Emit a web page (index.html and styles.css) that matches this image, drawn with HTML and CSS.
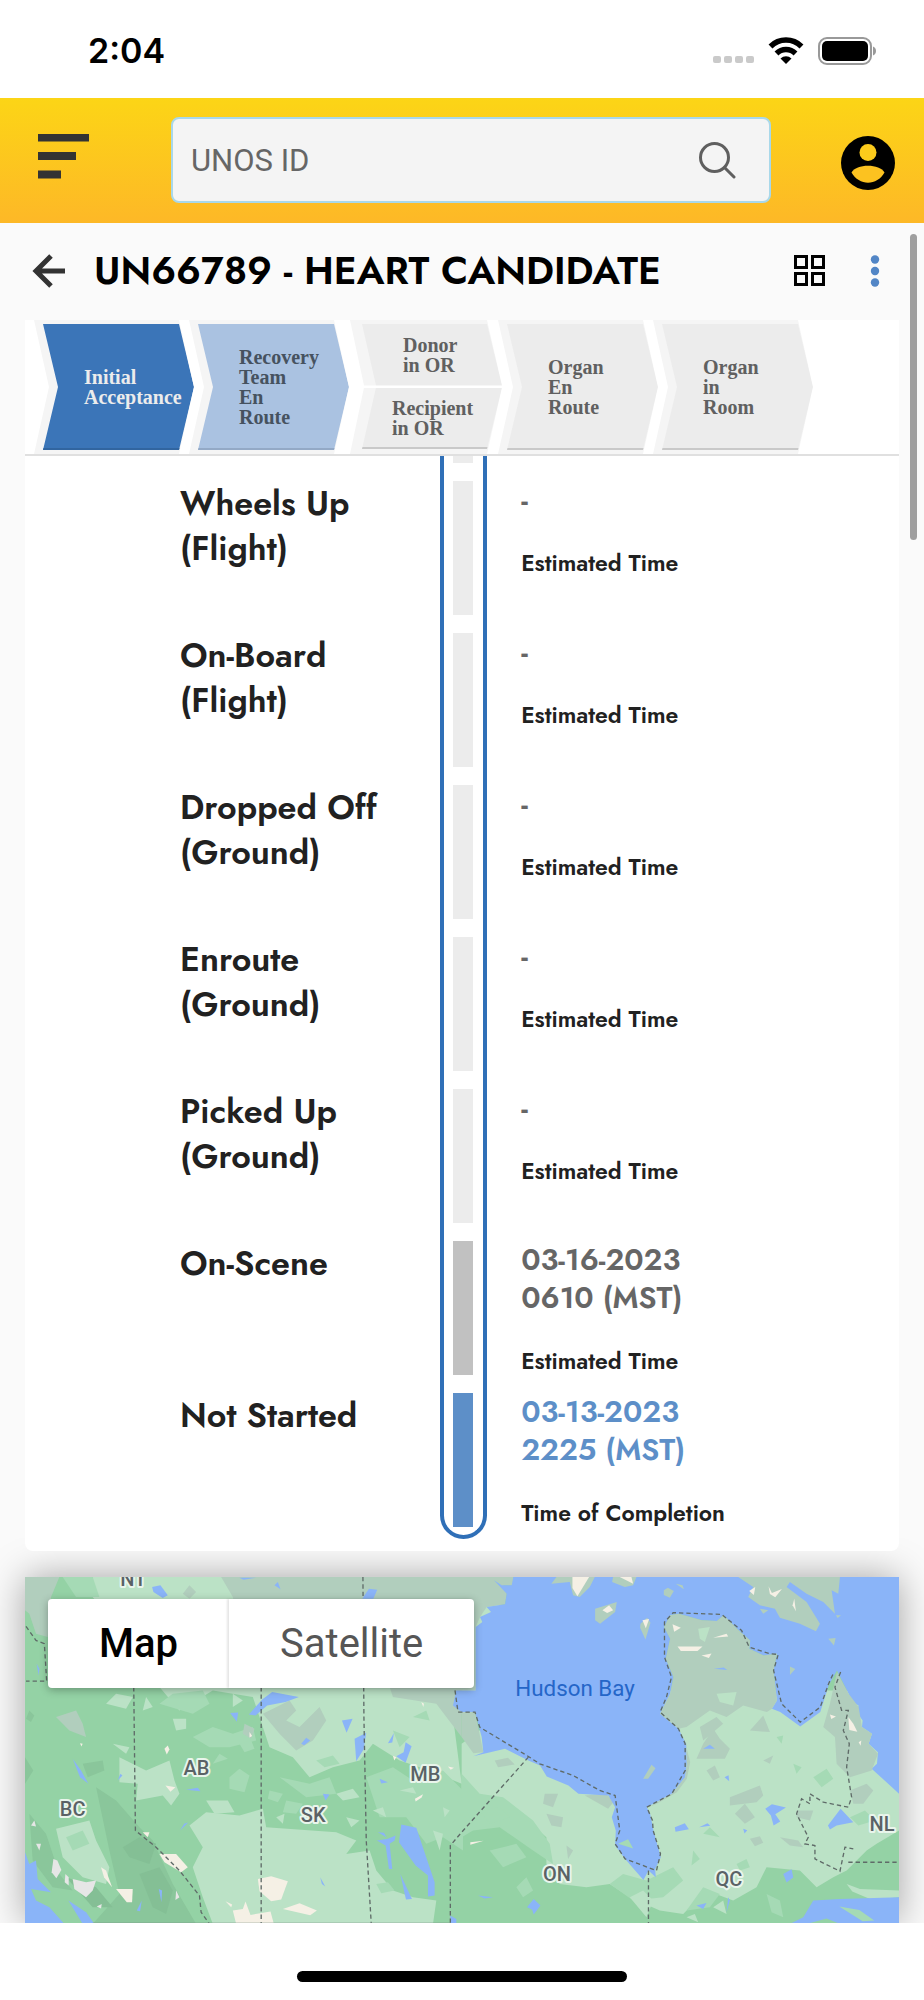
FILE: index.html
```html
<!DOCTYPE html>
<html lang="en">
  <head>
    <meta charset="UTF-8" />
    <meta name="viewport" content="width=device-width, initial-scale=1.0" />
    <title>UN66789 - Heart Candidate</title>
    <link rel="stylesheet" href="styles.css">
  </head>
  <body>
    <div class="status-bar">
      <span class="clock">2:04</span>
      <div class="status-icons">
        <svg width="41" height="28" viewBox="0 0 41 28" fill="#cacaca">
          <rect x="0" y="19" width="8" height="7" rx="2" />
          <rect x="11" y="19" width="8" height="7" rx="2" />
          <rect x="22" y="19" width="8" height="7" rx="2" />
          <rect x="33" y="19" width="8" height="7" rx="2" />
        </svg>
        <svg width="36" height="28" viewBox="0 0 36 28">
          <g fill="none" stroke="#000" stroke-width="5.500">
            <path d="M2.500 9.500a22 22 0 0 1 31 0" />
            <path d="M8.500 16.500a13.500 13.500 0 0 1 19 0" />
          </g>
          <path d="M12.500 21.500a8 8 0 0 1 11 0L18 27z" />
        </svg>
        <svg width="59" height="28" viewBox="0 0 59 28">
          <rect x="1" y="1" width="52" height="26" rx="8" fill="none" stroke="#999" stroke-width="2" />
          <rect x="4" y="4" width="46" height="20" rx="5" />
          <path d="M55 9.500c4 1 4 8 0 9z" fill="#999" />
        </svg>
      </div>
    </div>

    <header class="app-header">
      <button class="icon-btn" aria-label="Menu">
        <svg width="51" height="52" viewBox="0 1 51 52" fill="#333">
          <rect x="0" y="0.500" width="51" height="8" />
          <rect x="0" y="19" width="38" height="8" />
          <rect x="0" y="37.500" width="23" height="8" />
        </svg>
      </button>
      <form class="search">
        <input type="text" placeholder="UNOS ID" aria-label="UNOS ID" />
        <button class="icon-btn" type="button" aria-label="Search">
          <svg width="38" height="38" viewBox="0 0 38 38" fill="none" stroke="#5f5f5f" stroke-width="3">
            <circle cx="16.500" cy="16.500" r="14" />
            <path d="M26.500 26.500L36 36" stroke-linecap="round" />
          </svg>
        </button>
      </form>
      <button class="icon-btn" aria-label="Account">
        <svg width="54" height="60" viewBox="0 0 54 60">
          <circle cx="27" cy="33" r="27" />
          <circle cx="27" cy="22.500" r="8.500" fill="#fccb1c" />
          <path d="M10.500 42.500C15 33.500 39 33.500 43.500 42.500C36 56 18 56 10.500 42.500z" fill="#fcc220" />
        </svg>
      </button>
    </header>

    <main class="content">
      <div class="title-row">
        <button class="icon-btn" aria-label="Back">
          <svg width="34" height="34" viewBox="0 0 34 34" fill="none" stroke="#333" stroke-width="5">
            <path d="M33 17H4M19 2L4 17l15 15" />
          </svg>
        </button>
        <h1>UN66789 - HEART CANDIDATE</h1>
        <button class="icon-btn" aria-label="Grid view">
          <svg width="31" height="31" viewBox="0 0 31 31" fill="none" stroke="#000" stroke-width="3">
            <path d="M1.500 1.500h11v11h-11zM18.500 1.500h11v11h-11zM1.500 18.500h11v11h-11zM18.500 18.500h11v11h-11z" />
          </svg>
        </button>
        <button class="icon-btn more" aria-label="More">
          <svg width="10" height="32" viewBox="0 0 10 32" fill="#5286c6">
            <circle cx="5" cy="4.500" r="4.200" />
            <circle cx="5" cy="16" r="4.200" />
            <circle cx="5" cy="27.500" r="4.200" />
          </svg>
        </button>
      </div>

      <section class="card">
        <div class="steps">
          <div class="step"><div class="step-body active">Initial<br />Acceptance</div></div>
          <div class="step"><div class="step-body next">Recovery<br />Team<br />En<br />Route</div></div>
          <div class="step-split">
            <div class="half top"><div class="half-body">Donor<br />in OR</div></div>
            <div class="half bottom"><div class="half-body">Recipient<br />in OR</div></div>
          </div>
          <div class="step"><div class="step-body">Organ<br />En<br />Route</div></div>
          <div class="step"><div class="step-body">Organ<br />in<br />Room</div></div>
        </div>

        <ul class="timeline">
          <li class="row cut"><span></span><div class="track"><i></i></div></li>
          <li class="row">
            <h2>Wheels Up<br />(Flight)</h2>
            <div class="track"><i></i></div>
            <div class="times"><p class="date">-</p><p class="note">Estimated Time</p></div>
          </li>
          <li class="row">
            <h2>On-Board<br />(Flight)</h2>
            <div class="track"><i></i></div>
            <div class="times"><p class="date">-</p><p class="note">Estimated Time</p></div>
          </li>
          <li class="row">
            <h2>Dropped Off<br />(Ground)</h2>
            <div class="track"><i></i></div>
            <div class="times"><p class="date">-</p><p class="note">Estimated Time</p></div>
          </li>
          <li class="row">
            <h2>Enroute<br />(Ground)</h2>
            <div class="track"><i></i></div>
            <div class="times"><p class="date">-</p><p class="note">Estimated Time</p></div>
          </li>
          <li class="row">
            <h2>Picked Up<br />(Ground)</h2>
            <div class="track"><i></i></div>
            <div class="times"><p class="date">-</p><p class="note">Estimated Time</p></div>
          </li>
          <li class="row current">
            <h2>On-Scene</h2>
            <div class="track"><i></i></div>
            <div class="times"><p class="date">03-16-2023<br />0610 (MST)</p><p class="note">Estimated Time</p></div>
          </li>
          <li class="row done">
            <h2>Not Started</h2>
            <div class="track"><i></i></div>
            <div class="times"><p class="date">03-13-2023<br />2225 (MST)</p><p class="note">Time of Completion</p></div>
          </li>
        </ul>
      </section>

      <section class="map">
        <svg class="map-canvas" viewBox="77 140 2620 1040" preserveAspectRatio="xMidYMin slice">
          <rect x="77" y="140" width="2620" height="1040" fill="#94d2a5" />

          <!-- light prairie and shield areas -->
          <g fill="#bbe2c6">
            <path d="M280 140H1500V500L1360 560L1386 760L1290 720L1200 690L1120 640L1080 690L1000 710L930 740L880 680L810 650L780 560L760 500L640 480L540 540L480 470L280 200z" />
            <path d="M570 885L620 845L720 855L790 835L800 890L1010 905L1070 930L1040 970L1110 960L1130 1020L1180 1080L1240 1100L1310 1110L1300 1180H640L610 1100L580 1010L610 950z" />
            <path d="M360 680L440 720L510 690L525 750L540 790L515 825L490 795L410 810L415 760L360 755z" />
            <path d="M170 895L270 870L290 930L330 1010L320 1060L250 1040L190 980z" />
            <path d="M520 565h40v30l-30 5z" />
            <path d="M350 490l50 10-20 35-60-15z" />
            <path d="M620 810l25 40 60-5-20-35z" />
            <path d="M1386 640L1600 480H2697V900L2630 940L2600 960L2540 1020L2500 1040L2450 1070L2400 1020L2300 1010L2270 1070L2200 1110L2120 1080L2050 1150L1980 1140L1890 1100L1830 1060L1760 1070L1680 1060L1640 1000L1640 920L1560 850L1490 800L1386 790z" />
          </g>

          <!-- mid green -->
          <g fill="#a5dab5">
            <path d="M190 140H280L300 200H230z" />
            <path d="M690 740l30-25 30 20-15 50-45-10z" />
            <path d="M580 620l60-30 60 20 60-20 10 40-80 20-60 0z" />
            <path d="M1100 740l80-30 60 40 90-30 60 60v180l-60-40-50 20-60-80-80 0z" />
            <path d="M1386 730L1440 790L1510 800L1600 870L1650 940L1660 1000L1600 960L1500 890L1420 900L1386 920z" />
            <path d="M1470 960l80-20 30 40-70 30z" />
            <path d="M840 740l90 20 60-20 20 50-90 10z" />
            <path d="M480 520l40-30 90-10 20 40-50 30z" />
            <path d="M1830 1060l40-30 70 20 80-40 30 40-60 50-90 10z" />
            <path d="M1945 870l20 40 10 110-15-20z" />
            <path d="M2300 1090l40 20 10 50-35-15z" />
            <path d="M2080 960l20 25-25 20z" />
            <path d="M2110 1070l50 20-30 40-70 10z" />
            <path d="M200 920l50-20 20 40-50 20z" />
            <path d="M1130 1060l35-5 20 25-40 8z" />
            <path d="M720 640l35-10 10 25-30 10zM640 700l20-30 25 15zM810 780l40 10-15 25-30-10zM950 690l50-15 20 25-45 10zM1180 600l50 20-30 30zM1240 560l40-20 10 30z" />
            <path d="M2440 740l40-25 20 30-35 25zM2330 620l20-5-5 25zM2210 1000l30-15 10 25-30 10zM2110 910l20-20 30 30zM2380 700l25 10-15 20zM2550 860l45-20 30 30-50 15z" />
            <path d="M1440 840l60-10 30 30-60 20zM1550 1070l30-30 20 40-30 20zM860 810l50 10-20 30-40-5z" />
          </g>
          <g fill="#bbe2c6">
            <path d="M1010 790l50-15 20 25-50 10z" />
            <path d="M340 640l50 10-10 20zM440 500l20 30-30 10zM700 490l30 20-30 20zM830 860l25-10-5 30zM1040 860l40 10-25 20zM1200 780l40-10 10 20zM1120 840l30-10 10 30z" />
            <path d="M370 1090l40-15 10 30-30 30zM1330 830l20 10-15 20zM1300 900l30 10-10 50zM2540 1060l40 15 117 5v20l-80 8-60-25z" />
            <path d="M1890 1100l40-20 30 30-20 50zM2140 1130l30-20 10 40zM2060 1160l25-10 10 25z" />
          </g>

          <!-- mountains -->
          <g fill="#8ac69b">
            <path d="M90 540l15 15-10 20-15-10z" />
            <path d="M290 770l60 40 70 80 40 40 60 130 70 120H280l80-90-30-130z" />
            <path d="M77 680l25 40-25 40z" />
            <path d="M250 700l60-10 5 30-50 20z" />
            <path d="M90 850l50 60 40 120 40 50-60-10-60-80z" />
          </g>
          <g fill="#84bf95">
            <path d="M370 950l50-30 50 20-20 60-60-20z" />
            <path d="M420 1030l60-20 40 70-20 70-40-20z" />
            <path d="M200 1040l90 30 50 60-60 0z" />
          </g>

          <!-- tundra -->
          <g fill="#b1cebd">
            <path d="M77 140H180L155 200L145 320L110 310L90 250L77 240z" />
            <path d="M665 140H1541V165L1511 165L1521 190L1516 222L1461 230L1441 260L1428 290V480H1386V620L1340 560L1310 520L1180 500L1170 470H760L700 200z" />
            <path d="M790 550l80-40 20 30-30 30 40 20 60-60 20 40-40 60-50 30-50-50z" />
            <path d="M170 560l60-20 20 40 10 40-50-20z" />
            <path d="M550 190l20-25 20 20-20 20z" />
            <path d="M735 580l30 15-10 30-25-15z" />
            <path d="M1386 545H1426L1451 665L1421 668L1386 620z" />
            <path d="M1485 690l40-8 20 20-50 8z" />
            <path d="M1635 790l40 0-15 40-30-10z" />
            <path d="M1640 850l50 10-5 30-30-5z" />
            <path d="M1700 945l20 15-15 25z" />
            <path d="M1755 795l60-5 30 20-20 25z" />
          </g>

          <!-- Hudson Bay and the Atlantic -->
          <path fill="#8ab4f8" d="M1541 140L1536 165L1506 165L1483 150L1521 190L1516 222L1461 230L1474 245L1441 260L1448 275L1428 290V480H1370L1360 525L1386 545H1426L1446 620L1451 665L1421 677L1516 655L1586 690L1621 705L1641 738L1706 765L1736 790L1826 795L1846 830L1836 860L1848 900L1846 945L1876 985L1906 1020L1931 1048L1946 1020L1968 1040L1966 1015L1983 980L1961 900L1951 850L1941 830L2016 790L2056 740L2061 700L2059 640L2036 595L1981 550L2011 490L2021 440L1998 385L2011 325L1993 290L2011 255L2036 250L2106 270L2151 272L2171 255L2216 300L2251 330L2248 355L2291 375L2331 370L2321 420L2331 510L2316 535L2341 545L2401 588L2461 545L2486 465L2511 420L2546 490L2556 515L2576 525L2570 545L2588 570L2586 590L2616 610L2606 640L2634 665L2631 700L2615 715L2676 770L2697 790V140z" />
          <path fill="#b1cebd" d="M2060 590L2036 595L1981 550L2011 490L2021 440L1998 385L2011 325L1993 290L2011 255L2036 250L2106 270L2151 272L2171 255L2216 300L2251 330L2248 355L2291 375L2331 370L2321 420L2331 510L2316 535L2301 545L2230 525L2180 560L2130 540z" />
          <path fill="#b1cebd" d="M2511 425L2546 490L2576 530L2586 590L2616 610L2606 640L2634 670L2615 720L2550 740L2510 700L2505 620L2470 590L2490 520z" />
          <g fill="#b1cebd">
            <path d="M2036 595l20 40 15 60-10 50-30 40-60 35-25 10 70-40 40-50 5-40-2-60z" />
            <path d="M2100 590l50-30 20 20-60 50z" />
            <path d="M2110 640l30-45 20 30 30 30-15 30-85 0z" />
            <path d="M2250 600l40-45 20 50z" />
            <path d="M2120 720l25-15 15 35-20 10z" />
            <path d="M2190 800l90-35 10 30-20 20-80 10z" />
            <path d="M2205 850l30-30 30 40-30 20z" />
            <path d="M2250 925l30-8 10 20-25 10z" />
            <path d="M2340 920l55 10 15 20-40-5z" />
            <path d="M2390 840l50 0-10 30-40-10z" />
            <path d="M2290 690l30-15-10 25z" />
            <path d="M2550 780l50-20 20 20-30 40-30 0z" />
          </g>

          <!-- islands -->
          <g fill="#b1cebd">
            <path d="M1655 160l15-20h115l-15 30-30 30-20-5-10-40z" />
            <path d="M1840 140h70l-10 25-25 5-38-15z" />
            <path d="M1786 235l65-20-5 30-45 35-15-10z" />
            <path d="M1922 280l20-18 10 15-15 50-16-35z" />
            <path d="M1992 180l12-8 18 10-12 20-18-8z" />
            <path d="M2028 160l20 5 4 12z" />
            <path d="M2215 140H2520L2515 190L2495 180L2505 250L2470 215L2420 190L2370 155L2360 170L2420 215L2460 280L2448 303L2400 280L2340 262L2325 235L2280 225L2245 200L2260 170z" />
            <path d="M2485 325l22-2-5 22z" />
            <path d="M2280 235l25 5-15 10z" />
            <path d="M2370 408l16 8-16 18z" />
            <path d="M2508 255l15 0-10 8z" />
            <path d="M1930 745l25-42 12 10-22 32z" />
            <path d="M1855 940l30-14 15 28z" fill="#a5dab5" />
            <path d="M2095 295l35-5-15 45-15-10z" fill="#bbe2c6" />
            <path d="M2150 490l60-5-10 40-40-10z" fill="#bbe2c6" />
          </g>

          <!-- bare ground and snow -->
          <g fill="#f5f0e5">
            <path d="M1718 140h50l-35 58-15-25z" />
            <path d="M1860 140h35l5 20z" />
            <path d="M1808 240l20-15 12 15-18 8z" />
            <path d="M1928 270l20-4-10 28z" />
            <path d="M2018 282l25 10-20 12z" />
            <path d="M2033 348l75 0-15 14-50 0z" />
            <path d="M2140 322l40-12 5 8z" />
            <path d="M2105 375l30-6-8 14z" />
            <path d="M2248 182l18-12-4 24z" />
            <path d="M2306 168l10 20 30-12-20 25-16-10z" />
            <path d="M2378 225l5-20 5 38z" />
            <path d="M2545 560l15 20 12 24-24-5z" />
            <path d="M775 1045l40-8 50 15-20 55-30 5-35-30z" />
            <path d="M700 1140l30-5 8-22 15 40 60-10 10 37H710z" />
            <path d="M850 1135l50-17 52 22-20 14z" />
            <path d="M495 655l10-10 5 12-8 15z" />
            <path d="M498 765l30 5-15 14z" />
            <path d="M350 1075l50 0-2 40-16 0z" />
            <path d="M305 1010l15 10 18 50-24-30z" />
            <path d="M480 970l50 0 35 40-20 15-50-30z" />
            <path d="M1246 805l24-14-4 10-18 12z" />
            <path d="M430 905l20 0-5 15z" />
            <path d="M1412 935l40-4-40 12z" />
            <path d="M678 1112l20 10-3 8z" />
            <path d="M1345 708l18 4-10 6zM1265 515l8 5-2 10zM750 605l8 12-8 4zM1180 676l10 4-6 10zM2490 552l18 6-14 8zM2576 635l8-5-2 16zM242 638l8 2-4 8z" />
          </g>
          <g fill="#e6e6e6">
            <path d="M162 985l12 5 12 28-15 25-14-18z" />
            <path d="M220 1045l40 10 30-5-10 30-20 20-35-25z" />
            <path d="M198 1030l10 10 0 25-12-10z" />
            <path d="M95 885l10-15 5 18z" />
            <path d="M110 940l15 0-5 20z" />
            <path d="M530 1080l10 20-12 8z" />
            <path d="M292 1128l15-8-2 14z" />
          </g>

          <!-- lakes and coast -->
          <g fill="#8ab4f8">
            <path d="M77 965L90 1000L110 990L115 1045L155 1085L95 1075L110 1110L150 1130L195 1180H77z" />
            <path d="M207 1110L260 1145L285 1180H250z" />
            <path d="M458 170l25-5 22 30-15 8-28-18z" />
            <path d="M1088 205l20-30 25 3-12 27z" />
            <path d="M720 142h50l-38 6z" />
            <path d="M825 165l10-10 8 22z" />
            <path d="M748 552l40-45 30-22 80 15-40 15-55 10-35 30z" />
            <path d="M692 548l24-2-4 28z" />
            <path d="M1027 570l32-5-18 42z" />
            <path d="M1065 625l35-18-8 50-22 35z" />
            <path d="M905 640l15-18 12 8-18 14z" />
            <path d="M1165 638l18-30-5 28z" />
            <path d="M1218 635l18 12-18 50-28-20 22-12z" />
            <path d="M220 685l25 35 22 40-25-20z" />
            <path d="M560 778l35-6 8 10z" />
            <path d="M542 900l12-20 12-4z" />
            <path d="M970 790l20 2-12 18z" />
            <path d="M1140 745l25 10-20 4z" />
            <path d="M1205 882L1250 892L1305 1055L1305 1095L1285 1098V1035L1248 1005L1198 935z" />
            <path d="M1132 930L1165 925L1188 915L1185 930L1170 940L1178 1015H1168L1158 945z" />
            <path d="M1202 1030l35 75-18 2z" />
            <path d="M1135 905l18 2 8 14z" />
            <path d="M962 1040l15 28-10-8z" />
            <path d="M355 750l8-20 6 5z" />
            <path d="M112 400l8 15-2 20z" />
            <path d="M478 1075l10 5-2 35z" />
            <path d="M412 1140l15-30-5 32z" />
            <path d="M1352 1155l18 10v15h-18z" />
            <path d="M1582 1130l20-25 20 20-20 27-5-15z" />
            <path d="M1435 1095l45 5-25 4z" />
            <path d="M2025 890l30-12 12 18-40 8z" />
            <path d="M2098 890l25-12 8 8z" />
            <path d="M2296 835l20-14 42 10-32 20 15 22-20 12-8-30z" />
            <path d="M2484 885l38-50 38 40-50 10-20 12z" />
            <path d="M2174 740l12-6 2 18z" />
            <path d="M2110 655l20-12 15 12z" />
            <path d="M2142 415l30-4 10 8z" />
            <path d="M2350 1030l25-14 5 25-20 15z" />
            <path d="M2180 1145l5-45 5 10z" />
            <path d="M2090 1125l30-8-10 18z" />
            <path d="M2230 895l12 4-8 10z" />
            <path d="M2370 1180L2410 1160L2440 1110L2520 1105L2697 1100V1180z" />
          </g>
          <path fill="#a5dab5" d="M2518 1128l60 10 45 32-35 2z" />
          <path fill="#94d2a5" d="M2420 1180l60-16 40 16z" />

          <!-- province borders -->
          <g fill="none" stroke="#5f6b68" stroke-width="4" stroke-dasharray="13 9">
            <path d="M1090 140L1093 560L1100 930L1115 1180" />
            <path d="M403 470L408 900L470 950L540 1020L600 1095L605 1145L630 1180" />
            <path d="M785 470V1180" />
            <path d="M80 288L110 330L135 340L142 452H80" />
            <path d="M1366 480L1375 545H1426L1440 590L1586 678L1620 700L1720 735L1800 780L1846 795L1860 900L1846 940L1876 985L1970 1020L1982 970L1960 900L1958 870L1941 830L2016 790L2056 720V640L2036 595L1981 545L2000 500L2015 440L1994 380V275L2020 247L2165 252L2225 300L2248 350L2310 370L2335 372L2321 420L2345 520L2401 575L2461 530L2486 460L2502 425" />
            <path d="M1586 680L1386 905L1352 945V1180" />
            <path d="M1946 1020V1180" />
            <path d="M2522 425L2505 470L2525 540L2545 540L2530 600L2548 640L2540 710L2555 800L2545 830L2470 815L2430 790L2430 820L2405 805L2390 850L2425 920L2415 940L2445 945L2445 985L2520 1022L2535 950L2560 955M2545 995H2697" />
          </g>
          <path d="M280 1178H1352" stroke="#7a8a83" stroke-width="3" />

          <g class="map-labels">
            <text x="402" y="168">NT</text>
            <text x="591" y="734">AB</text>
            <text x="220" y="857">BC</text>
            <text x="941" y="875">SK</text>
            <text x="1277" y="751">MB</text>
            <text x="1672" y="1051">ON</text>
            <text x="2187" y="1065">QC</text>
            <text x="2646" y="902">NL</text>
          </g>
          <text class="map-water" x="1726" y="498">Hudson Bay</text>
        </svg>
        <div class="map-type">
          <button class="selected">Map</button>
          <button>Satellite</button>
        </div>
      </section>
      <div class="scrollbar"></div>
    </main>

    <footer class="home-bar"><span></span></footer>
  </body>
</html>
```

FILE: styles.css
```css
* {
  box-sizing: border-box;
  margin: 0;
  padding: 0;
}
body {
  font-family: Jost, Lato, sans-serif;
  background: #fff;
  color: #212121;
}
button {
  border: none;
  background: none;
  font: inherit;
  cursor: pointer;
}
.icon-btn svg {
  display: block;
}

/* phone status bar */
.status-bar {
  display: flex;
  justify-content: space-between;
  align-items: center;
  height: 98px;
  padding: 3px 47px 0 88px;
}
.clock {
  font-family: Inter, sans-serif;
  font-size: 34px;
  font-weight: 600;
  color: #000;
}
.status-icons {
  display: flex;
  gap: 14px;
}

/* yellow header */
.app-header {
  display: flex;
  align-items: center;
  height: 125px;
  padding: 0 29px 1px 38px;
  background: linear-gradient(#fcd516, #fdb827);
}
.search {
  flex: 1;
  display: flex;
  align-items: center;
  height: 86px;
  margin: 0 70px 0 82px;
  padding: 0 33px 0 18px;
  background: #f4f4f4;
  border: 2px solid #a8d8ea;
  border-radius: 8px;
}
.search input {
  flex: 1;
  min-width: 0;
  border: none;
  outline: none;
  background: none;
  font-family: Roboto, sans-serif;
  font-size: 31px;
  color: #5f5f5f;
}
.search input::placeholder {
  color: #666;
}

.content {
  position: relative;
  padding: 0 25px;
  background: #fafafa;
  overflow: hidden;
}
.title-row {
  display: flex;
  align-items: center;
  height: 97px;
  padding: 0 19px 2px 7px;
}
.title-row h1 {
  flex: 1;
  margin-left: 28px;
  font-size: 39px;
  font-weight: 600;
  line-height: 48px;
  color: #000;
  white-space: nowrap;
}
.more {
  margin-left: 45px;
}

.card {
  position: relative;
  z-index: 1;
  padding-bottom: 12px;
  background: #fff;
  border-radius: 0 0 8px 8px;
}

/* chevron steps */
.steps {
  display: flex;
  height: 136px;
  padding-left: 9px;
  border-bottom: 2px solid #e0e0e0;
  font-family: "Liberation Serif", serif;
  font-size: 20px;
  font-weight: 700;
  line-height: 20px;
  color: #606060;
}
.step,
.step-body {
  clip-path: polygon(0 0, calc(100% - 15px) 0, 100% 50%, calc(100% - 15px) 100%, 0 100%, 15px 50%);
}
.step {
  width: 160px;
  margin-right: -5px;
  padding: 4px 0 4px 9px;
  background: #f5f5f5;
}
.step-body {
  display: flex;
  align-items: center;
  height: 100%;
  padding: 2px 0 0 41px;
  background: #ececec;
  border-bottom: 2px solid #c9c9c9;
}
.step-body.active {
  background: #3b75b8;
  border-color: #3165a0;
  color: #ececec;
}
.step-body.next {
  background: #aac2e1;
  border-color: #93a9c6;
  color: #46525f;
}
.step-split {
  display: flex;
  flex-direction: column;
  gap: 2px;
  width: 152px;
  margin-right: -4px;
  margin-left: 6px;
}
.half {
  flex: 1;
  background: #f5f5f5;
}
.half-body {
  display: flex;
  align-items: center;
  height: 100%;
  background: #ececec;
}
.half.top {
  padding: 4px 0 0 12px;
}
.half.top,
.half.top .half-body {
  clip-path: polygon(0 0, calc(100% - 15px) 0, 100% 100%, 14px 100%);
}
.half.top .half-body {
  padding-left: 41px;
}
.half.bottom {
  padding: 0 0 5px 12px;
}
.half.bottom,
.half.bottom .half-body {
  clip-path: polygon(14px 0, 100% 0, calc(100% - 15px) 100%, 0 100%);
}
.half.bottom .half-body {
  padding: 2px 0 0 30px;
  border-bottom: 2px solid #c9c9c9;
}

/* timeline */
.timeline {
  list-style: none;
}
.row {
  display: grid;
  grid-template-columns: 47.5% 47px 1fr;
  height: 152px;
}
.row h2 {
  padding-left: 155px;
  font-size: 34px;
  font-weight: 600;
  line-height: 45px;
}
.track {
  padding: 0 9px 18px;
  border: solid #2f6fb7;
  border-width: 0 4px;
}
.track i {
  display: block;
  width: 20px;
  height: 100%;
  background: #ececec;
}
.times {
  padding-left: 34px;
}
.date {
  margin-bottom: 28px;
  font-size: 30px;
  font-weight: 600;
  line-height: 38px;
  color: #666;
}
.note {
  font-size: 23px;
  font-weight: 600;
  line-height: 32px;
}
.row.cut {
  height: 25px;
}
.row.current .track i {
  background: #c1c1c1;
}
.row.done {
  height: 146px;
}
.row.done .track {
  padding-bottom: 8px;
  border-width: 0 4px 4px;
  border-radius: 0 0 24px 24px;
}
.row.done .track i {
  background: #5d8fc8;
}
.row.done .date {
  color: #5d8fc8;
}

/* map */
.map {
  position: relative;
  height: 346px;
  margin-top: 26px;
  box-shadow: 0 0 36px rgba(0, 0, 0, 0.35);
}
.map-canvas {
  display: block;
  width: 100%;
  height: 100%;
}
.map-labels text {
  font-family: Roboto, sans-serif;
  font-size: 60px;
  font-weight: 500;
  text-anchor: middle;
  fill: #5a6266;
  stroke: #e9f5ec;
  stroke-width: 12px;
  stroke-linejoin: round;
  paint-order: stroke;
}
.map-water {
  font-family: Roboto, sans-serif;
  font-size: 67px;
  text-anchor: middle;
  fill: #2566c8;
}
.map-type {
  position: absolute;
  top: 22px;
  left: 23px;
  display: flex;
  border-radius: 4px;
  background: #fff;
  box-shadow: 0 2px 8px rgba(0, 0, 0, 0.3);
}
.map-type button {
  height: 89px;
  padding: 0 51px;
  font-family: Roboto, sans-serif;
  font-size: 40px;
  color: #565656;
}
.map-type button + button {
  box-shadow: -2px 0 2px rgba(0, 0, 0, 0.1);
}
.map-type .selected {
  font-weight: 500;
  color: #000;
}

.scrollbar {
  position: absolute;
  top: 11px;
  right: 7px;
  z-index: 2;
  width: 7px;
  height: 306px;
  border-radius: 4px;
  background: #9f9f9f;
}

.home-bar {
  position: relative;
  display: flex;
  justify-content: center;
  height: 77px;
  padding-top: 48px;
  background: #fff;
}
.home-bar span {
  width: 330px;
  height: 11px;
  border-radius: 6px;
  background: #000;
}
```
